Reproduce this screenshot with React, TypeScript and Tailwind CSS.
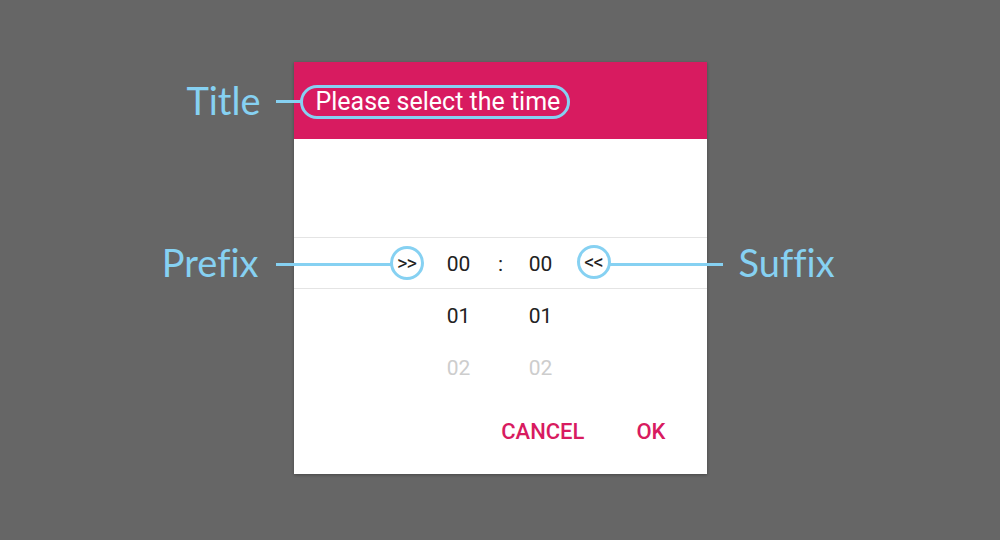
import type { ReactNode } from "react";

const accent = "#d81b60";

function PickerRow({
  prefix,
  hours,
  minutes,
  faded,
  selected,
}: {
  prefix?: ReactNode;
  hours: string;
  minutes: string;
  faded?: boolean;
  selected?: boolean;
}) {
  const tone = faded ? "text-[#cdcdcd]" : "text-[#222222]";
  return (
    <div
      className={`flex h-[52px] items-center justify-center ${
        selected ? "border-y border-[#e4e4e4]" : ""
      }`}
    >
      <div className="flex h-[34px] w-[34px] items-center justify-center">
        {prefix}
      </div>
      <div className={`ml-[13px] mt-[4px] w-[44px] text-center text-[21px] ${tone}`}>
        {hours}
      </div>
      <div className={`mt-[4px] w-[40px] text-center text-[21px] ${tone}`}>
        {selected ? ":" : ""}
      </div>
      <div className={`mt-[4px] w-[40px] text-center text-[21px] ${tone}`}>
        {minutes}
      </div>
      <div className="ml-[16px] h-[34px] w-[34px]" />
    </div>
  );
}

function Ring({ children }: { children: ReactNode }) {
  return (
    <div className="flex h-[34px] w-[34px] items-center justify-center rounded-full border-[3px] border-[#86d1f2] bg-white pb-[1px] text-[20px] tracking-[-1px] text-[#222222]">
      {children}
    </div>
  );
}

export default function App() {
  return (
    <div
      className="flex h-[540px] w-[1000px] justify-center bg-[#666666] pt-[62px]"
      style={{ fontFamily: "Roboto, 'Liberation Sans', sans-serif" }}
    >
      <div className="relative h-[412px] w-[413px] bg-white shadow-[0_1px_3px_rgba(0,0,0,0.3)]">
        {/* header */}
        <div className="flex h-[77px] items-center pl-[6px] pt-[2px]" style={{ backgroundColor: accent }}>
          <span className="inline-flex h-[34px] items-center rounded-full border-[3px] border-[#86d1f2] pl-[13px] pr-[7px] text-[25px] text-white">
            Please select the time
          </span>
        </div>

        {/* picker */}
        <div className="pt-[46px]">
          <div className="h-[52px]" />
          <div className="relative">
            <PickerRow prefix={<Ring>&gt;&gt;</Ring>} hours="00" minutes="00" selected />
            <div className="absolute left-[283px] top-[8px]">
              <Ring>&lt;&lt;</Ring>
            </div>
          </div>
          <PickerRow hours="01" minutes="01" />
          <PickerRow hours="02" minutes="02" faded />
        </div>

        {/* actions */}
        <div className="flex h-[81px] items-start justify-end pr-[41px] pt-[22px] text-[22px] font-medium" style={{ color: accent }}>
          <button className="mr-[52px]">CANCEL</button>
          <button>OK</button>
        </div>

        {/* annotations */}
        <div
          className="pointer-events-none absolute inset-0 text-[#86d1f2] [font-variant-ligatures:none]"
          style={{ fontFamily: "Lato, 'Open Sans', sans-serif" }}
        >
          <div className="absolute right-[446px] top-[15px] text-[38px] leading-[46px]">Title</div>
          <div className="absolute left-[-18px] top-[38px] h-[3px] w-[25px] bg-[#86d1f2]" />

          <div className="absolute right-[448px] top-[177px] text-[38px] leading-[46px]">Prefix</div>
          <div className="absolute left-[-18px] top-[201px] h-[3px] w-[115px] bg-[#86d1f2]" />

          <div className="absolute left-[316px] top-[201px] h-[3px] w-[113px] bg-[#86d1f2]" />
          <div className="absolute left-[445px] top-[177px] text-[38px] leading-[46px]">Suffix</div>
        </div>
      </div>
    </div>
  );
}
